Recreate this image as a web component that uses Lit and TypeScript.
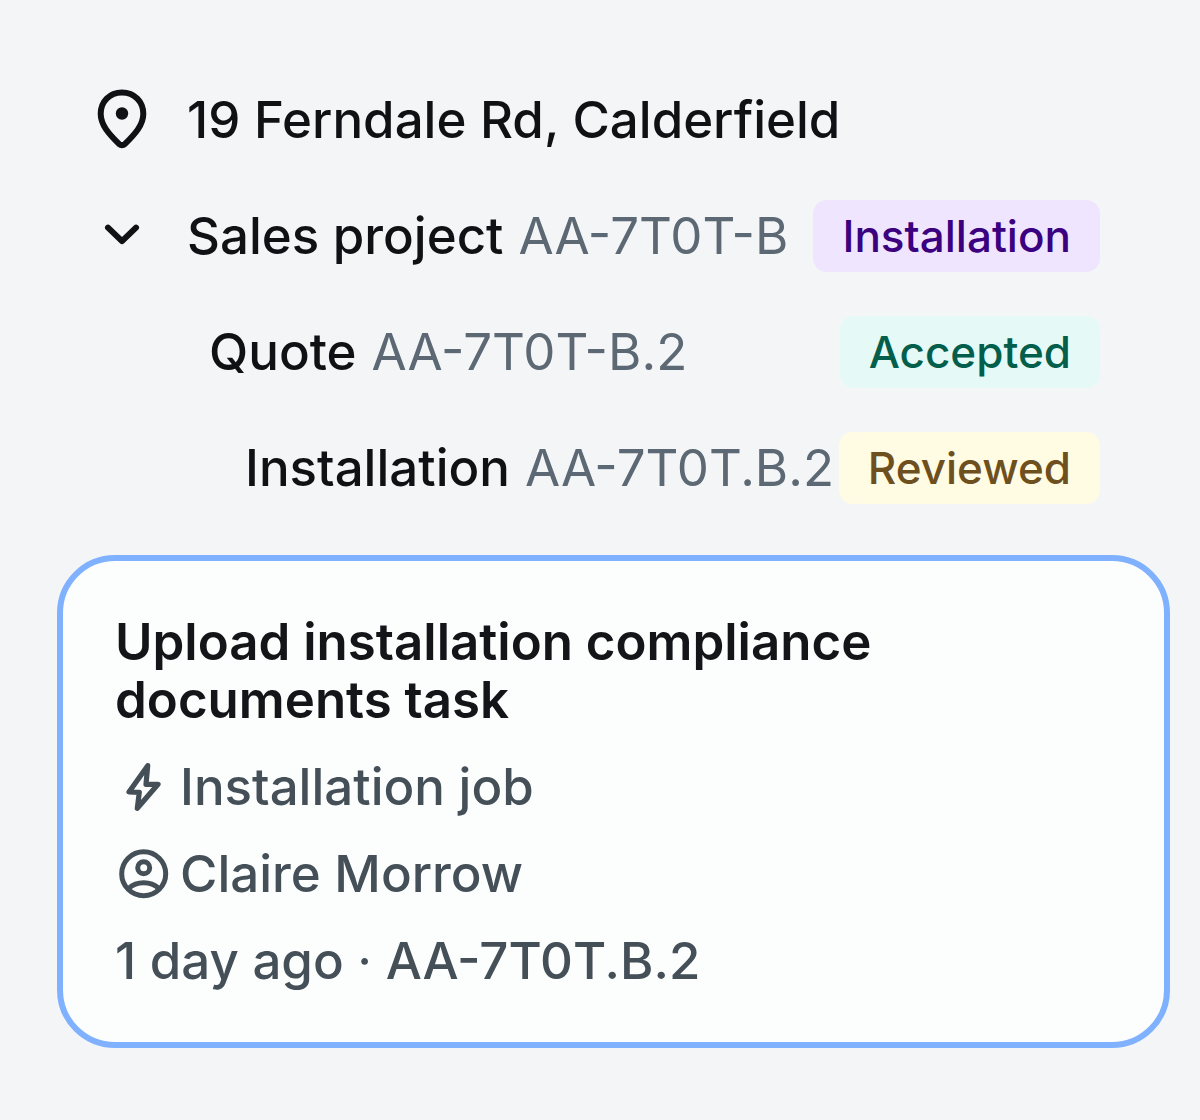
import { LitElement, html, css } from "lit";
import { customElement } from "lit/decorators.js";

interface TreeItem {
  name: string;
  code: string;
  status: string;
  tone: string;
  level: string;
}

const items: TreeItem[] = [
  { name: "Quote", code: "AA-7T0T-B.2", status: "Accepted", tone: "green", level: "quote" },
  { name: "Installation", code: "AA-7T0T.B.2", status: "Reviewed", tone: "yellow", level: "install" },
];

@customElement("app-root")
export class AppRoot extends LitElement {
  static styles = css`
    :host {
      display: block;
      box-sizing: border-box;
      min-height: 100vh;
      padding: 84px 30px 72px 57px;
      background: #f4f5f7;
      color: #0f1114;
      font-family: Inter, "Liberation Sans", sans-serif;
      font-size: 51px;
      font-weight: 500;
      line-height: 72px;
    }
    * { box-sizing: border-box; }
    svg { display: block; fill: none; stroke: currentColor; stroke-linecap: round; stroke-linejoin: round; flex: none; }
    .project { display: flex; flex-direction: column; gap: 44px; padding: 0 70px 0 36px; }
    .row { display: flex; align-items: center; white-space: nowrap; }
    .lead { display: flex; justify-content: center; width: 58px; margin-right: 36px; flex: none; }
    .toggle { padding: 0; border: 0; background: none; color: inherit; cursor: pointer; }
    .address, .label { margin: 0; font-size: inherit; font-weight: 500; }
    .label { display: flex; gap: 15px; flex: 1; }
    .code { color: #5c6873; font-weight: 400; }
    .quote { padding-left: 116px; }
    .install { padding-left: 152px; }
    .badge { padding: 0 29px; border-radius: 14px; font-size: 44px; }
    .purple { background: #efe5fe; color: #3b007f; }
    .green { background: #e5f9f7; color: #035f4b; }
    .yellow { background: #fffce3; color: #6e4f1e; }
    .card { margin-top: 51px; padding: 52px 52px 45px; border: 6px solid #80b1ff; border-radius: 58px; background: #fcfefd; color: #444f58; }
    .title { max-width: 800px; margin: 0 0 22px; color: #131518; font-size: 51px; font-weight: 600; line-height: 58px; }
    .line { display: flex; align-items: center; gap: 7px; margin: 0 0 15px; }
    .line:last-child { display: block; margin: 0; }
    .dot { font-weight: 400; }
  `;

  render() {
    return html`
      <section class="project">
        <div class="row">
          <span class="lead">
            <svg width="58" height="62" viewBox="0 0 58 62" stroke-width="6" aria-hidden="true"><path d="M29 3.4C16.5 3.4 7.7 12.7 7.7 24.7 7.7 36 16 45 26 54.9q3 2.6 6 0C42 45 50.3 36 50.3 24.7 50.3 12.7 41.5 3.4 29 3.4Z"/><circle cx="29" cy="24.5" r="6.2" fill="currentColor" stroke="none"/></svg>
          </span>
          <h1 class="address">19 Ferndale Rd, Calderfield</h1>
        </div>
        <div class="row">
          <button class="lead toggle" aria-label="Toggle sales project" aria-expanded="true">
            <svg width="58" height="58" viewBox="0 0 58 58" stroke-width="6" aria-hidden="true"><path d="m15 20.6 14 13.6 14-13.6"/></svg>
          </button>
          <h2 class="label">Sales project <span class="code">AA-7T0T-B</span></h2>
          <span class="badge purple">Installation</span>
        </div>
        ${items.map((item) => html`
          <div class="row ${item.level}">
            <h3 class="label">${item.name} <span class="code">${item.code}</span></h3>
            <span class="badge ${item.tone}">${item.status}</span>
          </div>`)}
      </section>
      <article class="card">
        <h2 class="title">Upload installation compliance documents task</h2>
        <p class="line">
          <svg width="58" height="58" viewBox="0 0 58 58" stroke-width="5.2" aria-hidden="true"><path d="M32.7 7.7 14 34l10.3.3-2 16L43 26.3H31Z"/></svg>
          Installation job
        </p>
        <p class="line">
          <svg width="58" height="58" viewBox="0 0 58 58" stroke-width="5" aria-hidden="true"><circle cx="28.7" cy="28.8" r="22"/><circle cx="28.7" cy="22.8" r="6"/><path d="M13.7 43.3c8-7.5 22-7.5 30 0"/></svg>
          Claire Morrow
        </p>
        <p class="line">1 day ago <span class="dot">·</span> AA-7T0T.B.2</p>
      </article>
    `;
  }
}
